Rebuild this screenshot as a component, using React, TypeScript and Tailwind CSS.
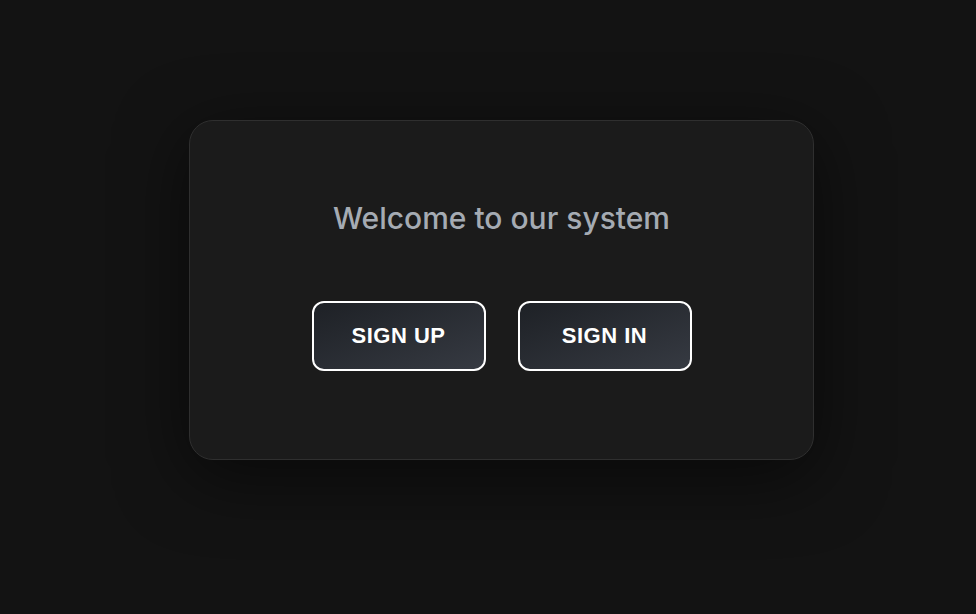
export default function App() {
  const buttons = ["SIGN UP", "SIGN IN"];

  return (
    <div className="flex h-screen w-full items-center justify-center bg-[#131313] pb-[34px] pl-[27px]">
      <div className="flex w-[625px] flex-col items-center rounded-[24px] border border-[#2f2f2f] bg-[#1b1b1b] pt-[79px] pb-[88px] shadow-[0_16px_70px_rgba(0,0,0,0.55)]">
        <h1 className="font-['Inter',sans-serif] text-[30px] leading-[36px] font-medium text-[#a5abb3]">
          Welcome to our system
        </h1>
        <div className="mt-[65px] flex gap-8">
          {buttons.map((label) => (
            <button
              key={label}
              className="flex h-[70px] w-[174px] items-center justify-center rounded-[12px] border-2 border-white bg-linear-to-br from-[#1e2126] to-[#363a42] pb-[2px] font-['Liberation_Sans',Arial,sans-serif] text-[22px] font-bold tracking-[0.5px] text-white"
            >
              {label}
            </button>
          ))}
        </div>
      </div>
    </div>
  );
}
